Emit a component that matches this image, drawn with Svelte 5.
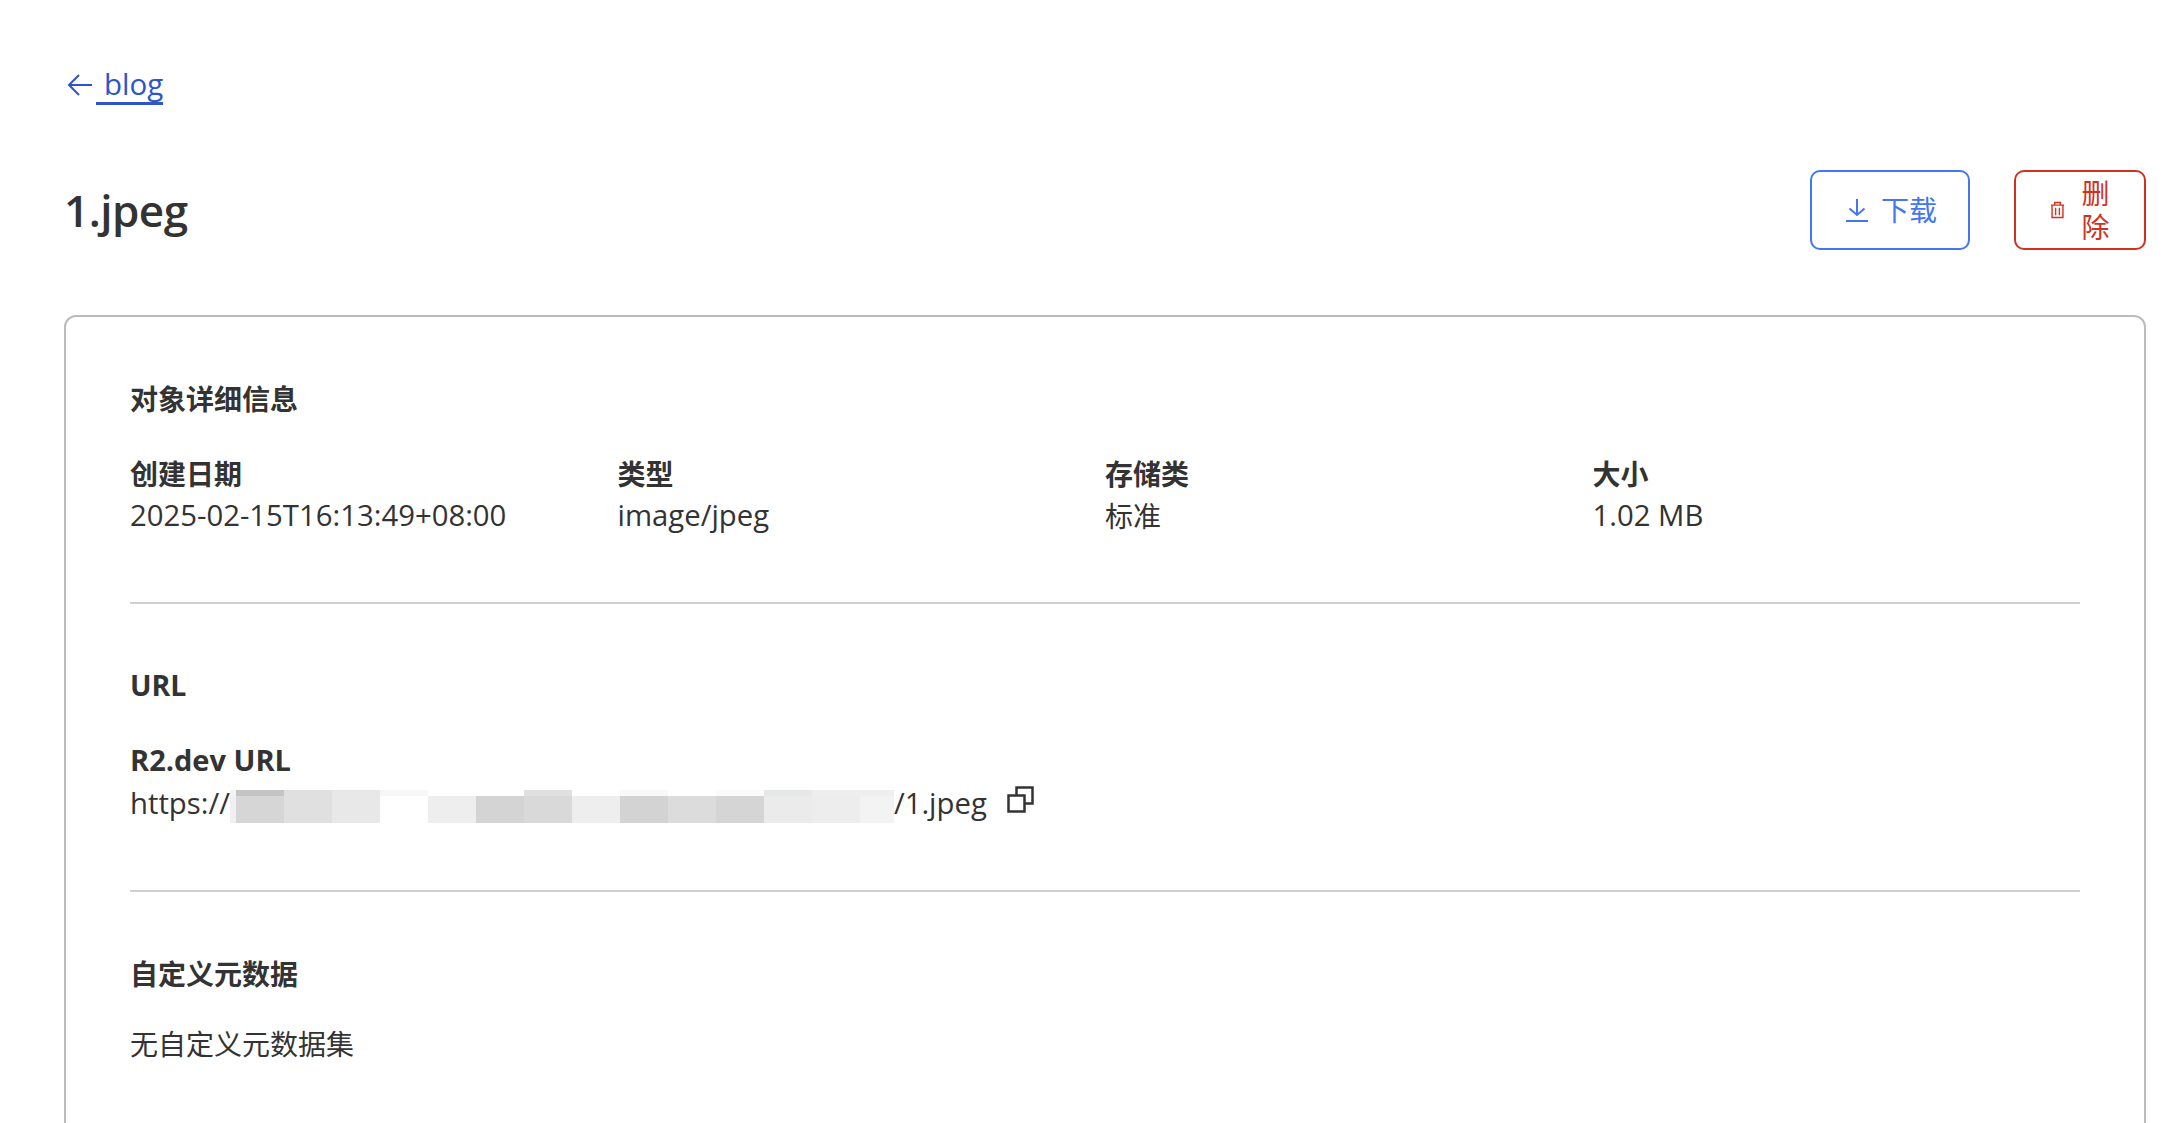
<script lang="ts">
  const details = [
    { label: '创建日期', value: '2025-02-15T16:13:49+08:00' },
    { label: '类型', value: 'image/jpeg' },
    { label: '存储类', value: '标准', cjk: true },
    { label: '大小', value: '1.02 MB' },
  ];

  // blurred part of the url: [top strip, main strip]
  const mosaic = [
    ['#f3f3f3', '#f0f0f0', 6],
    ['#c4c4c4', '#d6d6d6', 48],
    ['#e0e0e0', '#e0e0e0', 48],
    ['#e8e8e8', '#e8e8e8', 48],
    ['#f7f7f7', '#ffffff', 48],
    ['#ffffff', '#eeeeee', 48],
    ['#ffffff', '#d4d4d4', 48],
    ['#e0e0e0', '#d9d9d9', 48],
    ['#ffffff', '#eeeeee', 48],
    ['#f8f8f8', '#d3d3d3', 48],
    ['#ffffff', '#dcdcdc', 48],
    ['#fbfbfb', '#d5d5d5', 48],
    ['#e6e8e8', '#ebebeb', 48],
    ['#eeeeee', '#ededed', 48],
    ['#efefef', '#f3f3f3', 34],
  ] as [string, string, number][];
</script>

<div class="page">
  <a class="back" href="#top">
    <svg class="back-icon" viewBox="0 0 26 24" fill="none" stroke="currentColor" stroke-width="2">
      <path d="M25 12H2M12 2 2 12l10 10" />
    </svg>
    <span class="back-text"> blog</span>
  </a>

  <header class="head">
    <h1>1.jpeg</h1>
    <div class="actions">
      <button class="btn download">
        <svg class="dl-icon" viewBox="0 0 22 24" fill="none" stroke="currentColor" stroke-width="2">
          <path d="M11 1v16M3.500 10.500 11 17l7.500-6.500M0 23h22" />
        </svg>
        <span>下载</span>
      </button>
      <button class="btn delete">
        <svg class="del-icon" viewBox="0 0 16 18" fill="none" stroke="currentColor" stroke-width="1.500">
          <path d="M1 3.800h14M5 3.800V1h6v2.800M2.200 3.800V17h11.600V3.800M6 6.500v8M10 6.500v8" />
        </svg>
        <span class="del-text">删除</span>
      </button>
    </div>
  </header>

  <main class="card">
    <section class="info">
      <h2>对象详细信息</h2>
      <div class="grid">
        {#each details as d}
          <div>
            <div class="label">{d.label}</div>
            <div class="value" class:cjk={d.cjk}>{d.value}</div>
          </div>
        {/each}
      </div>
    </section>

    <hr />

    <section class="info second">
      <h2 class="latin">URL</h2>
      <div class="label url-label">R2.dev URL</div>
      <div class="url">
        <span class="value">https://</span>
        <span class="mosaic">
          {#each mosaic as [top, main, w]}
            <span class="tile" style="width:{w}px;background:linear-gradient({top} 6px,{main} 6px)"></span>
          {/each}
        </span>
        <span class="value">/1.jpeg</span>
        <svg class="copy" viewBox="0 0 27 27" fill="none" stroke="#333" stroke-width="2.500">
          <path d="M1.500 9.500h16v16h-16zM9.500 9V1.500h16v16H18" />
        </svg>
      </div>
    </section>

    <hr class="last" />

    <section class="info">
      <h2>自定义元数据</h2>
      <p class="value cjk empty">无自定义元数据集</p>
    </section>
  </main>
</div>

<style>
  :global(body) {
    margin: 0;
    background: #fff;
    overflow: hidden;
  }

  .page {
    height: 1123px;
    overflow: hidden;
    box-sizing: border-box;
    padding: 65px 26px 0 64px;
    font-family: "Open Sans", "Noto Sans CJK SC", sans-serif;
    font-size: 28px;
    color: #333;
  }

  .back {
    display: inline-flex;
    align-items: center;
    height: 40px;
    font-size: 29.500px;
    color: #2f55c8;
    text-decoration: none;
  }

  .back-icon {
    width: 26px;
    height: 24px;
    margin-left: 3px;
  }

  .back-text {
    margin-left: 3px;
    padding-left: 8px;
    line-height: 36px;
    border-bottom: 3px solid #2f55c8;
  }

  .head {
    display: flex;
    justify-content: space-between;
    align-items: center;
    margin-top: 65px;
  }

  h1 {
    margin: 0;
    font-size: 44px;
    font-weight: 600;
    letter-spacing: -0.500px;
  }

  .actions {
    display: flex;
    gap: 44px;
  }

  .btn {
    display: flex;
    align-items: center;
    justify-content: center;
    height: 80px;
    box-sizing: border-box;
    background: #fff;
    border-radius: 10px;
    border: 2px solid;
    padding: 0;
    font: inherit;
    line-height: 34px;
  }

  .download {
    width: 160px;
    gap: 13px;
    padding-left: 3px;
    color: #4476f0;
    border-color: #4476f0;
  }

  .dl-icon {
    width: 22px;
    height: 24px;
  }

  .delete {
    width: 132px;
    gap: 16px;
    color: #d0321e;
    border-color: #d0321e;
  }

  .del-icon {
    width: 15px;
    height: 18px;
  }

  .del-text {
    width: 30px;
  }

  .card {
    margin-top: 65px;
    padding: 64px 64px 0;
    height: 900px;
    box-sizing: border-box;
    border: 2px solid #bbb;
    border-radius: 12px;
  }

  h2 {
    margin: 0;
    font-size: 28px;
    line-height: 36px;
    font-weight: 700;
  }

  .latin {
    font-size: 28.500px;
  }

  .grid {
    display: grid;
    grid-template-columns: repeat(4, 1fr);
    margin-top: 39px;
  }

  .label {
    font-weight: 700;
    line-height: 36px;
  }

  .value {
    font-size: 29.300px;
    line-height: 43px;
    padding-top: 2px;
  }

  .value.cjk {
    font-size: 28px;
  }

  .grid .value.cjk {
    line-height: 41px;
    padding-top: 4px;
  }

  hr {
    margin: 65px 0;
    border: 0;
    border-top: 2px solid #d0d0d0;
  }

  hr.last {
    margin: 64px 0;
  }

  .second {
    margin-top: -2px;
  }

  .url-label {
    margin-top: 39px;
    font-size: 29px;
  }

  .url {
    display: flex;
    align-items: center;
    padding: 2px 0 1px;
  }

  .mosaic {
    display: flex;
    height: 33px;
    margin-top: 8px;
  }

  .tile {
    display: block;
  }

  .copy {
    width: 27px;
    height: 27px;
    margin: -6px 0 0 20px;
  }

  .empty {
    margin: 29px 0 0;
  }
</style>
